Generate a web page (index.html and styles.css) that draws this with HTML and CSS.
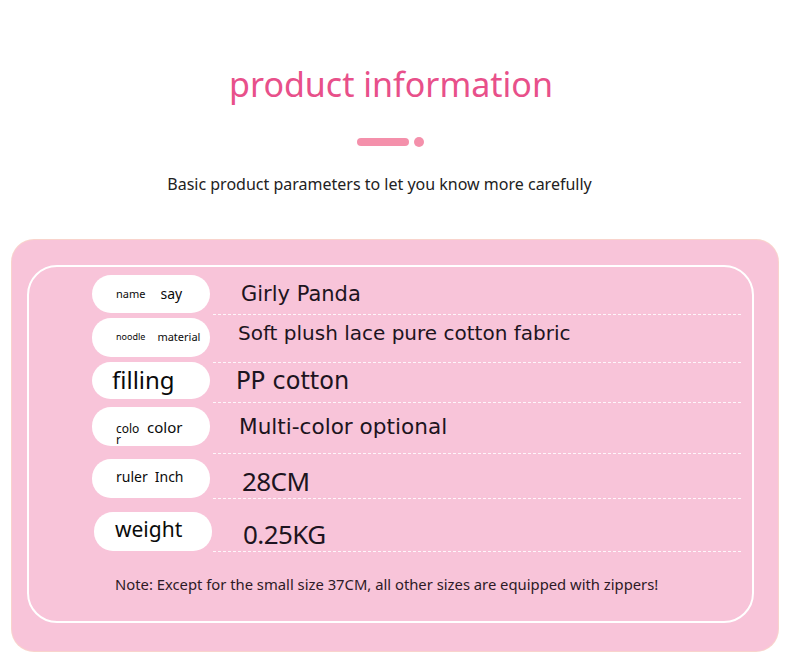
FILE: index.html
```html
<!DOCTYPE html>
<html>
<head>
<meta charset="utf-8">
<link rel="stylesheet" href="styles.css">
</head>
<body>
<div class="page">
  <header class="head">
    <h1 class="title">product information</h1>
    <div class="divider"><span class="bar"></span><span class="dot"></span></div>
    <p class="subtitle">Basic product parameters to let you know more carefully</p>
  </header>
  <section class="card">
    <div class="inner">
      <div class="row r1">
        <div class="pill"><span class="s11">name</span><span class="s14 gap">say</span></div>
        <div class="value v1">Girly Panda</div>
      </div>
      <div class="row r2">
        <div class="pill"><span class="s9">noodle</span><span class="s11 gap2">material</span></div>
        <div class="value v2">Soft plush lace pure cotton fabric</div>
      </div>
      <div class="row r3">
        <div class="pill"><span class="s24">filling</span></div>
        <div class="value v3">PP cotton</div>
      </div>
      <div class="row r4">
        <div class="pill"><span class="s12 narrow">colo r</span><span class="s15">color</span></div>
        <div class="value v4">Multi-color optional</div>
      </div>
      <div class="row r5">
        <div class="pill"><span class="s14">ruler</span><span class="s14 gap3">Inch</span></div>
        <div class="value v5">28CM</div>
      </div>
      <div class="row r6">
        <div class="pill"><span class="s21">weight</span></div>
        <div class="value v6">0.25KG</div>
      </div>
      <p class="note">Note: Except for the small size 37CM, all other sizes are equipped with zippers!</p>
    </div>
  </section>
</div>
</body>
</html>
```
FILE: styles.css
```css
* { box-sizing: border-box; }
html, body { margin: 0; padding: 0; background: #fff; }
body { width: 790px; height: 658px; overflow: hidden; font-family: "DejaVu Sans", sans-serif; }
.page { display: flex; flex-direction: column; }
.head { display: flex; flex-direction: column; align-items: center; }
.title {
  margin: 61px 0 0 -8px;
  font-family: "Noto Sans", sans-serif;
  font-weight: 400;
  font-size: 34px;
  line-height: 46px;
  color: #e8508a;
  letter-spacing: 0;
}
.divider { display: flex; align-items: center; gap: 5px; margin-top: 30px; margin-left: -10px; }
.bar { width: 52px; height: 8px; border-radius: 4px; background: #f490ab; }
.dot { width: 10px; height: 10px; border-radius: 50%; background: #f490ab; }
.subtitle {
  margin: 26px 0 0 -31px;
  font-family: "Noto Sans", sans-serif;
  font-size: 16px;
  line-height: 22px;
  color: #222;
}
.card {
  margin: 45px 12px 0;
  height: 411px;
  background: #f8c4d9;
  border-radius: 22px;
  box-shadow: 0 0 0 1px #f9d3cc;
  padding: 25px 24px 28px 15px;
}
.inner {
  height: 100%;
  border: 2px solid #fff;
  border-radius: 30px;
  padding: 8px 11px 0 63px;
  display: flex;
  flex-direction: column;
}
.row { display: flex; align-items: flex-start; }
.pill {
  width: 118px;
  height: 38px;
  border-radius: 19px;
  background: #fff;
  display: flex;
  align-items: center;
  padding-left: 24px;
  padding-bottom: 2px;
  color: #0a0a0a;
  font-family: "Noto Sans", sans-serif;
  flex: none;
}
.value {
  flex: 1;
  margin-left: 3px;
  border-bottom: 1px dashed rgba(255,255,255,0.85);
  color: #1d1420;
  font-family: "DejaVu Sans", sans-serif;
  display: flex;
  align-items: center;
}
.s9 { font-size: 9px; }
.s11 { font-size: 11px; }
.s12 { font-size: 12px; }
.s14 { font-size: 14px; }
.s15 { font-size: 15px; }
.s21 { font-size: 21px; }
.s24 { font-size: 24px; }
.gap { margin-left: 15px; }
.gap2 { margin-left: 12px; }
.gap3 { margin-left: 7px; }
.narrow { width: 24px; line-height: 11px; margin-top: 14px; margin-right: 7px; word-break: break-all; }
.r2 { margin-top: 3px; }
.r2 .pill { height: 39px; }
.r3 { margin-top: -1px; }
.r3 .pill { height: 37px; padding-left: 20px; }
.r4 { margin-top: 4px; }
.r4 .pill { height: 39px; padding-bottom: 0; }
.r5 { margin-top: 5px; }
.r5 .pill { height: 39px; align-items: flex-start; padding-top: 8px; }
.r6 { margin-top: 13px; }
.r6 .pill { margin-left: 2px; height: 39px; padding-left: 21px; align-items: flex-start; padding-top: 3px; }
.v1 { height: 40px; font-size: 21px; padding-left: 28px; padding-bottom: 2px; }
.v2 { height: 45px; font-size: 20px; padding-left: 25px; padding-bottom: 14px; }
.v3 { height: 41px; font-size: 24px; padding-left: 23px; padding-bottom: 2px; }
.v4 { height: 47px; font-size: 21.6px; padding-left: 26px; padding-bottom: 8px; }
.v5 { height: 40px; font-size: 26px; padding-left: 29px; padding-top: 5px; font-family: "Noto Sans", sans-serif; letter-spacing: -0.6px; }
.v6 { height: 40px; font-size: 26px; padding-left: 30px; padding-top: 5px; font-family: "Noto Sans", sans-serif; letter-spacing: -0.6px; }
.r6 .value { margin-left: 1px; }
.note {
  margin: 22px 0 0 23px;
  font-family: "Noto Sans", sans-serif;
  font-size: 14.8px;
  color: #2e1a26;
}
```
